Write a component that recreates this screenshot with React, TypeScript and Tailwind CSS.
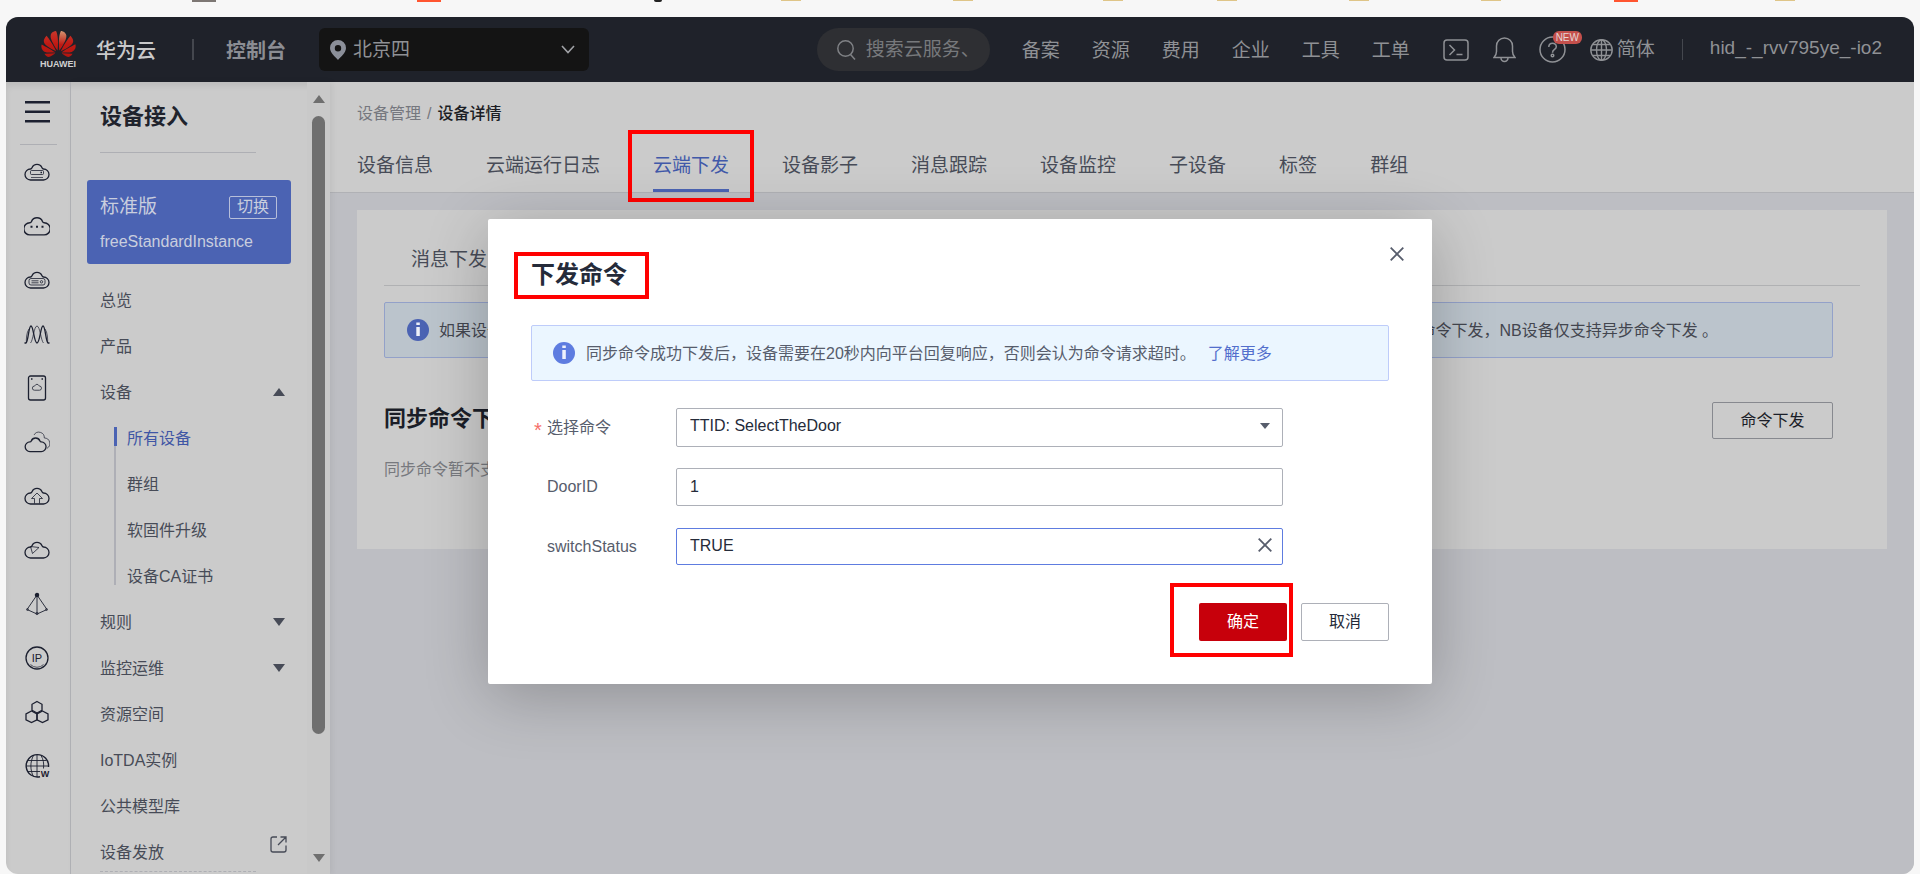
import type { ReactNode } from "react";
import clsx from "clsx";

const bookmarks = [
  "ml-[192px] h-[2px] w-6 bg-[#7d7774]",
  "ml-[201px] h-[2px] w-6 bg-[#ff5530]",
  "ml-[213px] h-[2px] w-2 rounded-b bg-[#222222]",
  "ml-[119px] h-px w-5 bg-[#dfc588]",
  "ml-[152px] h-px w-5 bg-[#dfc588]",
  "ml-[130px] h-px w-5 bg-[#dfc588]",
  "ml-[94px] h-px w-5 bg-[#dfc588]",
  "ml-[112px] h-px w-5 bg-[#dfc588]",
  "ml-[112px] h-px w-5 bg-[#dfc588]",
  "ml-[113px] h-[2px] w-6 bg-[#ff5530]",
  "ml-[137px] h-px w-5 bg-[#dfc588]",
];

const topNav = ["备案", "资源", "费用", "企业", "工具", "工单"];

const tabs = ["设备信息", "云端运行日志", "云端下发", "设备影子", "消息跟踪", "设备监控", "子设备", "标签", "群组"];

const menu = [
  { title: "总览" },
  { title: "产品" },
  { title: "设备", arrow: "up", children: ["所有设备", "群组", "软固件升级", "设备CA证书"] },
  { title: "规则", arrow: "down" },
  { title: "监控运维", arrow: "down" },
  { title: "资源空间" },
  { title: "IoTDA实例" },
  { title: "公共模型库" },
  { title: "设备发放", arrow: "external" },
];

const CLOUD =
  "M6.5 19h13a5.500 5.500 0 0 0 0-11q-1 0-1.500-1.200A5.400 5.400 0 0 0 8 6.800Q7.500 8 6.500 8A5.500 5.500 0 0 0 6.500 19z";

function RailIcon({ children }: { children: ReactNode }) {
  return (
    <svg width="26" height="26" viewBox="0 -2 26 26" fill="none" stroke="#1c2030" strokeWidth="1.3">
      {children}
    </svg>
  );
}

const railIcons = [
  {
    label: "弹性云服务器",
    icon: (
      <>
        <path d={CLOUD} />
        <rect x="6.5" y="9.5" width="13" height="4" rx="1" strokeWidth="0.8" />
        <path d="M16.5 11.5H18" />
        <path d="M7 16.5h12" strokeWidth="0.7" />
      </>
    ),
  },
  {
    label: "云耀云服务器",
    icon: (
      <>
        <path d={CLOUD} transform="translate(-1.3 -1) scale(1.1)" />
        <path d="M6.5 11.7h2M12 11.7h2M17.5 11.7h2" strokeWidth="2" />
      </>
    ),
  },
  {
    label: "裸金属服务器",
    icon: (
      <>
        <path d={CLOUD} />
        <rect x="5" y="9.5" width="16" height="6.5" rx="2" strokeWidth="0.8" />
        <path d="M7.500 11.800h7M7.500 13.800h7" strokeWidth="0.8" />
        <circle cx="17.5" cy="12.8" r="1.2" strokeWidth="0.8" />
      </>
    ),
  },
  {
    label: "弹性伸缩",
    icon: (
      <>
        <path d="M.5 20H2C4.500 18 4.500 3 7 3s3 17 6 17 3.500-17 6-17 2.500 15 5 17h1.500" />
        <path
          d="M2.500 20c-.5-3 0-11 2.500-14M6.500 20C9 18 10 3 13 3s4 15 6.500 17M23.500 20c.5-3 0-11-2.500-14"
          strokeWidth="0.7"
        />
      </>
    ),
  },
  {
    label: "专属主机",
    icon: (
      <>
        <rect x="4.5" y="-1" width="17" height="24" rx="2" />
        <path d="M7 2h1.500M17.500 2H19" strokeWidth="1.4" />
        <path d={CLOUD} transform="translate(8 6) scale(.38)" strokeWidth="2" />
      </>
    ),
  },
  {
    label: "虚拟私有云",
    icon: (
      <>
        <path d={CLOUD} transform="translate(.3 4) scale(.87)" strokeWidth="1.5" />
        <path d="M10 4a5.500 5.500 0 0 1 10.300 3 5.500 5.500 0 0 1 2.700 10.300" strokeWidth="0.7" />
      </>
    ),
  },
  {
    label: "对象存储",
    icon: (
      <>
        <path d={CLOUD} />
        <path d="M10.500 18.500v-5h-3L13 8l5.500 5.500h-3v5" strokeWidth="0.8" />
      </>
    ),
  },
  {
    label: "云备份",
    icon: (
      <>
        <path d={CLOUD} />
        <path d="M6.500 7.500l8.500 1-6.500 6z" strokeWidth="0.8" />
      </>
    ),
  },
  {
    label: "云解析",
    icon: (
      <>
        <path d="M13 2v19M13 2L3 16.500 13 21l10-4.500z" strokeWidth="0.9" />
        <circle cx="13" cy="2" r="1.6" fill="#1c2030" />
        <circle cx="3.5" cy="16.5" r="1" strokeWidth="0.7" />
        <circle cx="22.5" cy="16.5" r="1" strokeWidth="0.7" />
        <circle cx="13" cy="20.5" r="1.2" strokeWidth="0.7" />
      </>
    ),
  },
  {
    label: "弹性公网IP",
    icon: (
      <>
        <circle cx="13" cy="11" r="11" />
        <path d="M6.500 17.500a9 9 0 0 0 13 0" strokeWidth="0.7" />
        <text x="13" y="15" textAnchor="middle" fontSize="11" stroke="none" fill="#1c2030">
          IP
        </text>
      </>
    ),
  },
  {
    label: "区块链",
    icon: (
      <>
        <path d="M13 .5l5 2.800v5.900L13 12 8 9.200V3.300z" />
        <path d="M7.500 10l5.500 2.800v6L7.500 21.500 2 18.800v-6z" />
        <path d="M18.500 10l5.500 2.800v6l-5.500 2.700-5.500-2.700v-6z" />
      </>
    ),
  },
  {
    label: "Web应用",
    icon: (
      <>
        <path d="M16 21.700A11.200 11.200 0 1 1 24.500 12" strokeWidth="1.4" />
        <path
          d="M13 0v22M2 11h22.500M4 5.500h18.500M4 16.500h12M9.500.5c-3.500 6-3.500 15 0 21M17 .5c2.500 4 3 8 2.500 13"
          strokeWidth="0.9"
        />
        <text x="21" y="22" textAnchor="middle" fontSize="9" fontWeight="700" stroke="none" fill="#1c2030">
          W
        </text>
      </>
    ),
  },
];

function Triangle({ up, className }: { up?: boolean; className?: string }) {
  return (
    <svg width="12" height="8" viewBox="0 0 12 8" className={className} fill="currentColor">
      <path d={up ? "M0 8L6 0l6 8z" : "M0 0h12L6 8z"} />
    </svg>
  );
}

function InfoIcon({ color }: { color: string }) {
  return (
    <svg width="22" height="22" viewBox="0 0 22 22" className="shrink-0">
      <circle cx="11" cy="11" r="11" fill={color} />
      <path d="M9.300 3.500h3.500V6H9.300zM9.300 8h3.500v9H9.300z" fill="#ffffff" fillOpacity="0.9" />
    </svg>
  );
}

function Cross() {
  return (
    <svg width="14" height="14" viewBox="0 0 14 14" fill="none" stroke="#575d6c" strokeWidth="1.8">
      <path d="M.7.7l12.600 12.600M13.300.7L.7 13.300" />
    </svg>
  );
}

function Mark({ className }: { className: string }) {
  return <span className={clsx("pointer-events-none absolute border-4 border-[#ff0000]", className)} />;
}

function Header() {
  return (
    <header className="flex h-[65px] shrink-0 items-center bg-[#1f222a] text-[19px] text-[#8f9195]">
      <div className="ml-[34px] flex w-[36px] flex-col items-center">
        <svg width="35" height="26" viewBox="0 2.9 24 18.2">
          <defs>
            <linearGradient id="petal" x1="0" y1="0" x2="0" y2="1">
              <stop offset="0" stopColor="#c8372c" />
              <stop offset="0.5" stopColor="#c01a14" />
              <stop offset="1" stopColor="#b3150f" />
            </linearGradient>
            <linearGradient id="petalLight" x1="0" y1="0" x2="0" y2="1">
              <stop offset="0" stopColor="#d4936f" />
              <stop offset="0.7" stopColor="#c01a14" />
            </linearGradient>
          </defs>
          <path
            fill="url(#petal)"
            d="M3.67 6.14S1.82 7.91 1.72 9.78v.35c.08 1.51 1.22 2.4 1.22 2.4 1.83 1.79 6.26 4.04 7.3 4.55 0 0 .06.03.1-.01l.02-.04v-.04C7.52 10.8 3.67 6.14 3.67 6.14zM9.65 18.6c-.02-.08-.1-.08-.1-.08l-7.38.26c.8 1.43 2.15 2.53 3.56 2.2.96-.25 3.16-1.78 3.88-2.3.06-.05.04-.09.04-.09zm.08-.78C6.49 15.63.21 12.28.21 12.28c-.15.46-.2.9-.21 1.3v.07c0 1.07.4 1.82.4 1.82.8 1.69 2.34 2.2 2.34 2.2.7.3 1.4.31 1.4.31.12.02 4.4 0 5.54 0 .05 0 .08-.05.08-.05v-.06c0-.03-.03-.05-.03-.05zM9.06 3.19a3.42 3.42 0 00-2.57 3.15v.41c.03.6.16 1.05.16 1.05.66 2.9 3.86 7.65 4.55 8.65.05.05.1.03.1.03a.1.1 0 00.06-.1c1.06-10.6-1.11-13.42-1.11-13.42-.32.02-1.19.23-1.19.23zM14.44 18.53s-.07 0-.09.05c0 0-.01.07.03.1.7.51 2.85 2 3.88 2.3 0 0 .16.05.43.06h.14c.69-.02 1.9-.37 3-2.26l-7.4-.25zm7.83-8.41c.14-2.06-1.94-3.97-1.94-3.98 0 0-3.85 4.66-6.67 10.8 0 0-.03.08.02.13l.04.01h.06c1.06-.53 5.46-2.77 7.28-4.54 0 0 1.15-.93 1.21-2.42zm1.52 2.14s-6.28 3.37-9.52 5.55c0 0-.05.04-.03.11 0 0 .03.06.07.06 1.16 0 5.56 0 5.67-.02 0 0 .57-.02 1.27-.29 0 0 1.56-.5 2.37-2.27 0 0 .73-1.45.17-3.14z"
          />
          <path
            fill="url(#petalLight)"
            d="M17.36 5.46s-.49-1.8-2.44-2.28c0 0-.57-.14-1.17-.22 0 0-2.18 2.81-1.12 13.43.01.07.06.08.06.08.07.03.1-.03.1-.03.72-1.03 3.9-5.76 4.55-8.64 0 0 .36-1.4.02-2.34z"
          />
        </svg>
        <span className="mt-[2px] text-[9px] font-bold leading-[10px] text-[#d0d0d0]">HUAWEI</span>
      </div>
      <a href="#home" className="ml-5 whitespace-nowrap pt-[2px] text-xl font-medium text-[#c9c9ca]">华为云</a>
      <span className="ml-[36px] h-[21px] w-[2px] bg-[#44474e]" />
      <a href="#console" className="ml-8 whitespace-nowrap pt-[2px] text-xl font-bold text-[#8b8d93]">控制台</a>
      <button className="ml-[33px] flex h-[43px] w-[270px] items-center rounded-md bg-[#141414] pl-[11px] pr-[14px]">
        <svg width="16" height="20" viewBox="0 0 16 20" fill="#8b8f99">
          <path
            fillRule="evenodd"
            d="M8 0a8 8 0 0 0-8 8c0 5 5.500 9 8 12 2.500-3 8-7 8-12a8 8 0 0 0-8-8zm0 5a3.200 3.200 0 1 1 0 6.400A3.200 3.200 0 0 1 8 5z"
          />
        </svg>
        <span className="ml-[7px] pt-[2px]">北京四</span>
        <svg width="14" height="9" viewBox="0 0 14 9" className="ml-auto" fill="none" stroke="#a0a2a6" strokeWidth="1.6">
          <path d="M1 1l6 6.500L13 1" />
        </svg>
      </button>

      <label className="ml-auto flex h-[43px] w-[173px] items-center rounded-full bg-[#2e2f33] pl-5 pr-4">
        <svg width="19" height="20" viewBox="0 0 19 20" className="shrink-0" fill="none" stroke="#7f8185" strokeWidth="1.5">
          <circle cx="8.5" cy="8.5" r="7.7" />
          <path d="M13.500 14.500l4.500 5" />
        </svg>
        <input
          aria-label="搜索"
          placeholder="搜索云服务、"
          className="ml-[10px] w-full min-w-0 bg-transparent pt-px outline-none placeholder:text-[#77797c]"
        />
      </label>
      <nav className="ml-8 flex gap-8 whitespace-nowrap pt-1">
        {topNav.map((t) => (
          <a key={t} href="#nav">{t}</a>
        ))}
      </nav>
      <button aria-label="命令行" className="ml-[33px]">
        <svg width="26" height="22" viewBox="0 0 26 22" fill="none" stroke="#8f9195" strokeWidth="1.5">
          <rect x="1" y="1" width="24" height="20" rx="3" />
          <path d="M6.500 6l5 5-5 5M13.500 15.500h6" />
        </svg>
      </button>
      <button aria-label="通知" className="ml-6">
        <svg width="23" height="26" viewBox="0 0 23 26" fill="none" stroke="#8f9195" strokeWidth="1.5">
          <path d="M1 20.500h21c-1.500-1.500-2.500-3-2.500-6V9a8 8 0 0 0-16 0v5.500c0 3-1 4.500-2.500 6zM8 21a3.500 3.500 0 0 0 7 0" />
        </svg>
      </button>
      <button aria-label="帮助" className="relative ml-[23px]">
        <svg width="27" height="27" viewBox="0 0 27 27" fill="none" stroke="#8f9195" strokeWidth="1.5">
          <circle cx="13.5" cy="13.5" r="12.5" />
          <path d="M9.800 11c0-5 7.500-4.800 7.500-.3 0 2.800-3.800 2.600-3.800 6" />
          <circle cx="13.5" cy="19.5" r="1.3" />
        </svg>
        <span className="absolute -top-[5px] left-[14px] flex h-[13px] w-[29px] items-center justify-center rounded-md bg-[#c4504c] text-[10px] text-[#e6d5d4]">
          NEW
        </span>
      </button>
      <button className="ml-6 flex items-center gap-1 whitespace-nowrap">
        <svg width="23" height="22" viewBox="0 0 23 22" fill="none" stroke="#8f9195" strokeWidth="1.4">
          <ellipse cx="11.5" cy="11" rx="10.7" ry="10.2" />
          <ellipse cx="11.5" cy="11" rx="5" ry="10.2" />
          <path d="M11.500 1v20M1 11h21M3 5.500h17M3 16.500h17" />
        </svg>
        <span className="pt-[2px]">简体</span>
      </button>
      <span className="ml-[27px] h-[21px] w-px bg-[#44474e]" />
      <a href="#account" className="ml-[27px] mr-8 pb-[2px]">hid_-_rvv795ye_-io2</a>
    </header>
  );
}

function Rail() {
  return (
    <nav className="flex w-[65px] shrink-0 flex-col items-center border-r border-[#b2b3b7]">
      <button aria-label="菜单" className="mb-1 flex h-[58px] items-center pt-px text-[#1c2030]">
        <svg width="26" height="24" viewBox="0 0 26 24" fill="currentColor">
          <path d="M0 1h25v2.500H0zM0 10.500h25V13H0zM0 20h25v2.500H0z" />
        </svg>
      </button>
      <span className="h-px w-[37px] bg-[#aeafb4]" />
      {railIcons.map((r) => (
        <a key={r.label} href="#service" aria-label={r.label} className="flex h-[54px] items-center pr-[2px]">
          <RailIcon>{r.icon}</RailIcon>
        </a>
      ))}
    </nav>
  );
}

function Sidebar() {
  return (
    <aside className="z-10 flex w-[259px] shrink-0 shadow-[2px_0_6px_rgba(0,0,0,0.06)]">
      <div className="w-[236px]">
        <h1 className="ml-[29px] flex h-[71px] w-[156px] items-center border-b border-[#aeafb4] pb-[2px] text-[22px] font-bold text-[#20232d]">
          设备接入
        </h1>
        <div className="ml-4 mt-[27px] h-[84px] w-[204px] rounded-[3px] bg-[#4b63b3] pl-[13px] pr-[14px] pt-[15px] text-[#c9cede]">
          <div className="flex h-6 items-center justify-between text-[19px]">
            标准版
            <button className="flex h-[23px] w-12 items-center justify-center rounded-[2px] border border-[#b7bfda] text-base">
              切换
            </button>
          </div>
          <p className="mt-[11px] leading-6">freeStandardInstance</p>
        </div>
        <ul className="mt-[13px] text-[#474b57]">
          {menu.map((m) => (
            <li key={m.title}>
              <a href="#menu" className="ml-[29px] flex h-[46px] items-center justify-between pr-[22px]">
                <span className="pt-[2px]">{m.title}</span>
                {m.arrow === "up" && <Triangle up />}
                {m.arrow === "down" && <Triangle />}
                {m.arrow === "external" && (
                  <svg
                    width="17"
                    height="17"
                    viewBox="0 0 17 17"
                    className="mb-4 -mr-[2px]"
                    fill="none"
                    stroke="currentColor"
                    strokeWidth="1.3"
                  >
                    <path d="M7 1H3a2 2 0 0 0-2 2v11a2 2 0 0 0 2 2h11a2 2 0 0 0 2-2V9.500M10.500 1H16v5.500M16 1L8 9" />
                  </svg>
                )}
              </a>
              {m.children && (
                <ul className="relative pl-[56px]">
                  <span className="absolute bottom-[14px] left-[43px] top-3 w-[2px] bg-[#aeafb6]" />
                  <span className="absolute left-[43px] top-3 h-[19px] w-[3px] bg-[#4b63b3]" />
                  {m.children.map((c, i) => (
                    <li key={c}>
                      <a href="#menu" className={clsx("flex h-[46px] items-center pt-px", i === 0 && "text-[#3f56a5]")}>
                        {c}
                      </a>
                    </li>
                  ))}
                </ul>
              )}
            </li>
          ))}
        </ul>
        <div className="-mt-1 ml-[29px] w-[156px] border-t border-dashed border-[#aeafb4]" />
      </div>
      <div className="flex flex-1 flex-col items-center bg-[#c9c9c9] pb-3 pt-[13px] text-[#6f6f6f]">
        <Triangle up className="shrink-0" />
        <div className="mb-auto mt-[13px] h-[618px] w-[13px] rounded-full bg-[#6f6f6f]" />
        <Triangle className="shrink-0" />
      </div>
    </aside>
  );
}

function Content() {
  return (
    <main className="min-w-0 flex-1 bg-[#bdbec3]">
      <div className="border-b border-[#b0b1b5] bg-[#cbcbcb] px-[27px] pt-5">
        <div className="flex h-6 items-center text-[#75777e]">
          <a href="#devices">设备管理</a>
          <span className="mx-[6px]">/</span>
          <span className="font-medium text-[#1b1d24]">设备详情</span>
        </div>
        <div role="tablist" className="mt-3 flex gap-[53px] text-[19px] text-[#474b57]">
          {tabs.map((t, i) => (
            <button
              key={t}
              role="tab"
              aria-selected={i === 2}
              className={clsx(
                "relative h-[54px] whitespace-nowrap border-b-[3px] pt-[6px]",
                i === 2 ? "border-[#4b63b3] text-[#4159a9]" : "border-transparent"
              )}
            >
              {t}
              {i === 2 && <Mark className="-left-[25px] -right-[25px] -top-2 -bottom-[13px]" />}
            </button>
          ))}
        </div>
      </div>

      <section className="mx-[27px] mt-[17px] bg-[#cbcbcb] px-[27px] pb-[67px]">
        <div className="flex h-[76px] items-end border-b border-[#b0b1b3] pb-3 pl-[27px] text-[19px] leading-[26px] text-[#474b57]">
          <button>消息下发</button>
        </div>
        <div className="mr-[27px]">
          <div className="mt-4 flex h-14 items-center overflow-hidden whitespace-nowrap rounded-[2px] border border-[#93a1c9] bg-[#bbc4cc] pl-[22px] text-[#43464f]">
            <InfoIcon color="#4b63b3" />
            <p className="ml-[10px] pt-[2px]">
              如果设备需要及时响应平台下发的指令，请选择同步命令下发，平台等待设备返回执行结果； 如果设备不在线或无需立即响应，请选择异步命令下发，NB设备仅支持异步命令下发 。
            </p>
          </div>
          <div className="mt-11 flex items-center justify-between">
            <h2 className="pb-1 text-[22px] font-bold leading-7 text-[#1b1e28]">同步命令下发</h2>
            <button className="h-[37px] w-[121px] rounded-[2px] border border-[#87898f] text-[#1b1e28]">命令下发</button>
          </div>
          <p className="mt-[19px] leading-6 text-[#77797e]">同步命令暂不支持查看历史记录</p>
        </div>
      </section>
    </main>
  );
}

function CommandDialog() {
  const field = "w-[607px] rounded-[2px] border bg-white px-[13px] text-[#252b3a] outline-none";
  return (
    <div className="absolute inset-0 z-20 flex items-start justify-center pt-[202px]">
      <div
        role="dialog"
        aria-labelledby="dialog-title"
        className="relative w-[944px] rounded-[2px] bg-white px-[43px] pb-[43px] pt-[38px] text-[#575d6c] shadow-[0_12px_64px_rgba(0,0,0,0.24)]"
      >
        <button aria-label="关闭" className="absolute right-7 top-7 flex">
          <Cross />
        </button>
        <h2 id="dialog-title" className="relative w-fit text-2xl font-bold leading-9 text-[#252b3a]">
          下发命令
          <Mark className="-bottom-[6px] -left-[17px] -right-[22px] -top-[5px]" />
        </h2>
        <div className="mt-8 flex h-14 items-center rounded-[2px] border border-[#beccfa] bg-[#ebf6ff] pl-[21px]">
          <InfoIcon color="#5e7ce0" />
          <p className="ml-[11px] pt-[2px]">
            同步命令成功下发后，设备需要在20秒内向平台回复响应，否则会认为命令请求超时。
            <a href="#more" className="ml-3 text-[#526ecc]">了解更多</a>
          </p>
        </div>
        <form className="mt-[27px]">
          <div className="flex items-center">
            <label htmlFor="command" className="flex w-[145px] items-center pl-[3px]">
              <span className="w-[13px] pt-1 text-xl leading-5 text-[#f66f6a]">*</span>选择命令
            </label>
            <div className="relative">
              <select id="command" className={clsx(field, "h-[39px] appearance-none border-[#adb0b8] pb-1")}>
                <option>TTID: SelectTheDoor</option>
              </select>
              <svg
                width="10"
                height="6"
                viewBox="0 0 10 6"
                fill="#575d6c"
                className="pointer-events-none absolute right-[13px] top-[15px]"
              >
                <path d="M0 0h10L5 6z" />
              </svg>
            </div>
          </div>
          <div className="mt-[21px] flex items-center">
            <label htmlFor="door" className="w-[145px] pl-4">DoorID</label>
            <input id="door" defaultValue="1" className={clsx(field, "h-[38px] border-[#adb0b8]")} />
          </div>
          <div className="mt-[22px] flex items-center">
            <label htmlFor="status" className="w-[145px] pl-4">switchStatus</label>
            <div className="relative">
              <input id="status" defaultValue="TRUE" className={clsx(field, "h-[37px] border-[#5e7ce0] pb-[2px]")} />
              <button type="button" aria-label="清空" className="absolute right-[11px] top-[10px] flex">
                <Cross />
              </button>
            </div>
          </div>
          <div className="mt-[38px] flex justify-end gap-[14px]">
            <button type="button" className="relative h-[38px] w-[88px] rounded-[2px] bg-[#c7000b] text-white">
              确定
              <Mark className="-bottom-4 -left-[29px] -right-[6px] -top-5" />
            </button>
            <button type="button" className="h-[38px] w-[88px] rounded-[2px] border border-[#adb0b8] text-[#252b3a]">
              取消
            </button>
          </div>
        </form>
      </div>
    </div>
  );
}

export default function App() {
  return (
    <div
      lang="zh-CN"
      className="flex h-screen flex-col overflow-hidden bg-[#f7f7f7] font-['Liberation_Sans','Noto_Sans_CJK_SC',sans-serif] text-base"
    >
      <div className="flex h-[17px] shrink-0 items-start">
        {bookmarks.map((b, i) => (
          <span key={i} className={clsx("shrink-0", b)} />
        ))}
      </div>
      <div className="relative mx-[6px] flex min-h-0 flex-1 flex-col overflow-hidden rounded-xl bg-[#cbcbcb]">
        <Header />
        <div className="flex min-h-0 flex-1 shadow-[inset_0_4px_6px_rgba(0,0,0,0.08)]">
          <Rail />
          <Sidebar />
          <Content />
        </div>
        <CommandDialog />
      </div>
    </div>
  );
}
